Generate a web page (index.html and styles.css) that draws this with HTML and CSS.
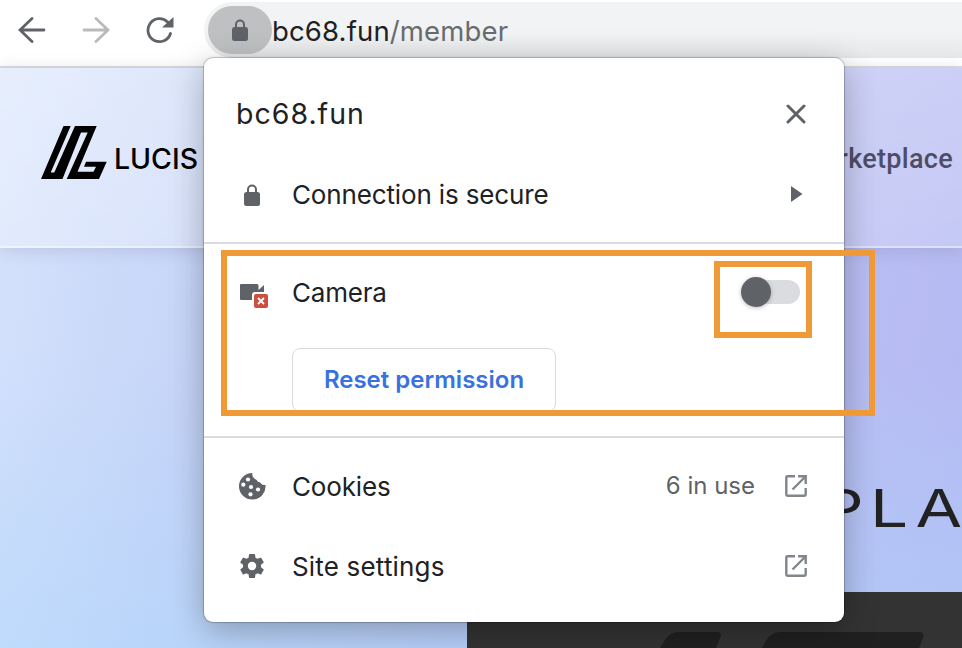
FILE: index.html
```html
<!DOCTYPE html>
<html lang="en">
<head>
<meta charset="utf-8">
<title>bc68.fun/member</title>
<link rel="stylesheet" href="styles.css">
</head>
<body>
<header class="toolbar">
  <nav class="nav">
    <svg width="28" height="28" viewBox="0 0 28 28"><path class="line" d="M26 14H2M14 2.500L2 14L14 25.500"/></svg>
    <svg class="disabled" width="28" height="28" viewBox="0 0 28 28"><path class="line" d="M2 14H26M14 2.500L26 14L14 25.500"/></svg>
    <svg class="reload" width="30" height="28" viewBox="0 0 30 28"><path class="line" d="M22.800 6.200A11.500 11.500 0 1 0 25.500 17.500"/><path class="fill" d="M28.500 1V11.500H17Z"/></svg>
  </nav>
  <div class="address">
    <span class="lock-pill"><svg width="18" height="22" viewBox="0 0 18 22"><path class="shackle" d="M5 9V5.500a4 4 0 0 1 8 0V9"/><rect class="fill" x="1" y="8" width="16" height="14" rx="2.500"/></svg></span>
    <span class="url">bc68.fun<span class="path">/member</span></span>
  </div>
</header>
<main class="page">
  <div class="site-header">
    <div class="brand">
      <svg class="mark" width="68" height="56" viewBox="0 0 68 56"><path d="M23.500 1H30.700L10.700 47.500H14.300L35 1H56.700L37.500 46.700H53.500L56 41.700H44L46 36.700H66.700L59 54H26.700L47.700 7.500H41L22.500 54H1Z"/></svg>
      <svg class="wordmark" width="88" height="28" viewBox="0 0 88 28"><text x="0" y="24" textLength="84" lengthAdjust="spacingAndGlyphs">LUCIS</text></svg>
    </div>
    <span class="menu-link">Marketplace</span>
  </div>
  <svg class="headline" width="118" height="48" viewBox="0 0 118 48"><g transform="scale(1.300 1)"><text y="43" x="-18 20 55">PLA</text></g></svg>
  <div class="dark-panel">
    <svg width="495" height="56" viewBox="0 0 495 56"><path d="M193 56L198 48Q203 40 212 40H250Q256 40 253 46L249 56ZM295 56L300 47Q305 40 314 40H452Q458 40 456 46L452 56Z"/></svg>
  </div>
</main>

<section class="popup">
  <div class="row title-row">
    <h1>bc68.fun</h1>
    <svg class="close" width="20" height="20" viewBox="0 0 20 20"><path d="M2 2L18 18M18 2L2 18"/></svg>
  </div>
  <div class="row secure-row">
    <span class="icon"><svg width="18" height="22" viewBox="0 0 18 22"><path class="shackle" d="M5 9V5.500a4 4 0 0 1 8 0V9"/><rect class="fill" x="1" y="8" width="16" height="14" rx="2.500"/></svg></span>
    <span class="label secure">Connection is secure</span>
    <svg class="chevron" width="12" height="16" viewBox="0 0 12 16"><path class="fill" d="M0 0L11.500 8L0 16Z"/></svg>
  </div>
  <hr>
  <div class="camera-group">
    <div class="row camera-row">
      <span class="icon"><svg class="camera" width="30" height="26" viewBox="0 0 30 26"><path class="fill" d="M2 1H18Q19.500 1 19.500 2.500V7L25 2V17H2Q1 17 1 16V2Q1 1 2 1Z"/><rect x="13" y="9" width="18" height="18" rx="3" fill="#fff"/><rect x="15" y="11" width="14" height="14" rx="2" fill="#cc4e3f"/><path d="M19 15L25 21M25 15L19 21" stroke="#fff" stroke-width="1.800"/></svg></span>
      <span class="label camera-label">Camera</span>
      <span class="toggle"><span class="knob"></span></span>
    </div>
    <button class="reset"><span>Reset permission</span></button>
  </div>
  <hr>
  <div class="row cookie-row">
    <span class="icon"><svg width="28" height="28" viewBox="0 0 28 28"><path class="fill" d="M14.500 1A13.300 13.300 0 1 0 27.500 13Q24.500 13.300 23 11.500Q22.500 9.500 20 10Q19 7.500 17 7Q13.500 5 14.500 1Z"/><g fill="#fff"><circle cx="10" cy="7.500" r="2.100"/><circle cx="5.300" cy="12.700" r="2.100"/><circle cx="13" cy="15" r="2.100"/><circle cx="20" cy="17.500" r="2.100"/><circle cx="12.500" cy="22.300" r="2.100"/></g></svg></span>
    <span class="label cookies">Cookies</span>
    <span class="count">6 in use</span>
    <svg class="open" width="24" height="24" viewBox="0 0 24 24"><path d="M11 2.300H3.500Q2.300 2.300 2.300 3.500V20.500Q2.300 21.700 3.500 21.700H20.500Q21.700 21.700 21.700 20.500V14M14 2.300H21.700V10M21 3L8.500 15.500"/></svg>
  </div>
  <div class="row settings-row">
    <span class="icon"><svg width="28" height="28" viewBox="2 2 20 20"><path class="fill" d="M19.430 12.980c.04-.32.070-.64.070-.98s-.03-.66-.07-.98l2.110-1.650c.19-.15.240-.42.120-.64l-2-3.460c-.12-.22-.39-.3-.61-.22l-2.490 1c-.52-.4-1.080-.73-1.690-.98l-.38-2.650C14.460 2.180 14.250 2 14 2h-4c-.25 0-.46.180-.49.420l-.38 2.650c-.61.250-1.170.59-1.690.98l-2.490-1c-.23-.09-.49 0-.61.220l-2 3.460c-.13.220-.07.490.12.640l2.110 1.650c-.04.320-.07.650-.07.980s.03.660.070.980l-2.110 1.650c-.19.150-.24.420-.12.640l2 3.460c.12.220.39.300.61.220l2.490-1c.52.400 1.080.73 1.690.98l.38 2.650c.03.240.24.420.49.420h4c.25 0 .46-.18.490-.42l.38-2.650c.61-.25 1.170-.59 1.690-.98l2.490 1c.23.090.49 0 .61-.22l2-3.460c.12-.22.070-.49-.12-.64l-2.110-1.650zM12 15.500a3.500 3.500 0 1 1 0-7 3.500 3.500 0 0 1 0 7z" transform="translate(1.700 1.700) scale(.86)"/></svg></span>
    <span class="label settings">Site settings</span>
    <svg class="open" width="24" height="24" viewBox="0 0 24 24"><path d="M11 2.300H3.500Q2.300 2.300 2.300 3.500V20.500Q2.300 21.700 3.500 21.700H20.500Q21.700 21.700 21.700 20.500V14M14 2.300H21.700V10M21 3L8.500 15.500"/></svg>
  </div>
</section>
<div class="highlight highlight-row"></div>
<div class="highlight highlight-toggle"></div>
</body>
</html>
```
FILE: styles.css
```css
* { box-sizing: border-box; }
body {
  position: relative;
  margin: 0;
  width: 962px;
  height: 648px;
  overflow: hidden;
  display: flex;
  flex-direction: column;
  font-family: Inter, "Liberation Sans", sans-serif;
  color: #202124;
}
svg { display: block; flex: none; }
.fill { fill: #5f6368; }
.line { fill: none; stroke: #5f6368; stroke-width: 2.8; stroke-linecap: round; }
.shackle { fill: none; stroke: #5f6368; stroke-width: 2; }
.disabled .line { stroke: #bababa; }

.toolbar {
  display: flex;
  height: 68px;
  flex: none;
  background: #fff;
  border-bottom: 2px solid #dadce0;
}
.nav { display: flex; align-items: center; width: 204px; height: 60px; padding-left: 18px; }
.nav svg + svg { margin-left: 36px; }
.nav .reload { margin-left: 35px; }
.address {
  display: flex;
  align-items: center;
  flex: 1;
  height: 56px;
  margin-top: 2px;
  padding-left: 4px;
  border-radius: 28px 0 0 28px;
  background: linear-gradient(to bottom, #f1f3f4 50%, #e6e7e9);
}
.lock-pill {
  display: flex;
  align-items: center;
  justify-content: center;
  width: 64px;
  height: 48px;
  border-radius: 24px;
  background: #bfc0c2;
}
.url { padding-top: 2px; font-size: 27.5px; line-height: 54px; letter-spacing: .15px; white-space: nowrap; }
.path { color: #696b6e; }

.page {
  flex: 1;
  display: flex;
  flex-direction: column;
  align-items: flex-end;
  background:
    linear-gradient(to bottom, transparent 50%, rgba(172, 216, 253, .45)),
    linear-gradient(100deg, #d5e3fc 0%, #c6d4f8 23%, #bcc2f4 65%, #b5b9f2 100%);
}
.site-header {
  display: flex;
  align-items: center;
  justify-content: space-between;
  width: 100%;
  height: 180px;
  flex: none;
  padding: 0 9px 0 40px;
  background: linear-gradient(165deg, rgba(255, 255, 255, .42), rgba(255, 255, 255, .2));
  border-bottom: 2px solid rgba(255, 255, 255, .35);
  box-shadow: 0 2px 16px rgba(60, 60, 90, .16);
}
.brand { display: flex; align-items: center; padding-bottom: 9px; }
.wordmark { margin: 12px 0 0 6px; }
.wordmark text { font: 500 28px Inter, sans-serif; }
.menu-link {
  padding-top: 3px;
  font: 500 27px/40px Roboto, sans-serif;
  letter-spacing: .3px;
  color: #4f4c67;
}
.headline { margin-top: 236px; fill: #222; }
.headline text { font: 400 52px Inter, sans-serif; }
.dark-panel { width: 495px; height: 56px; margin-top: auto; background: #333; }
.dark-panel path { fill: #202020; }

.popup {
  position: absolute;
  left: 204px;
  top: 58px;
  width: 640px;
  height: 564px;
  background: #fff;
  border-radius: 9px;
  box-shadow: 0 0 1px 1px rgba(0, 0, 0, .22), 0 9px 34px rgba(0, 0, 0, .28);
}
.popup hr { height: 2px; margin: 0; border: 0; background: #dadce0; }
.row { display: flex; align-items: center; padding: 0 36px 0 32px; white-space: nowrap; }
.title-row { height: 112px; justify-content: space-between; }
.title-row h1 { margin: 0; font-size: 28.500px; font-weight: 400; line-height: 40px; letter-spacing: 1px; }
.close { margin-right: 2px; }
.close path { stroke: #5f6368; stroke-width: 3; fill: none; stroke-linecap: round; }
.secure-row { height: 72px; padding-bottom: 22px; }
.icon { display: flex; justify-content: center; width: 32px; flex: none; }
.label { margin-left: 24px; flex: 1; font-size: 26px; line-height: 40px; }
.secure { letter-spacing: -.14px; }
.camera-label { letter-spacing: -.2px; }
.cookies { letter-spacing: -.15px; }
.settings { letter-spacing: .18px; }
.chevron { margin: 0 5px 2px 0; }
.camera-group { height: 192px; }
.camera-row { height: 98px; padding-right: 44px; }
.camera { margin: 5px 0 0 4px; }
.toggle { display: flex; align-items: center; width: 58px; height: 24px; border-radius: 12px; background: #dadce0; margin-top: -2px; }
.knob { flex: none; width: 30px; height: 30px; margin-left: -1px; border-radius: 50%; background: #5f6368; box-shadow: 0 1px 4px rgba(0, 0, 0, .25); }
.reset {
  display: block;
  width: 264px;
  height: 64px;
  margin: 6px 0 0 88px;
  padding: 0;
  border: 1px solid #dadce0;
  border-radius: 8px;
  background: #fff;
  color: #3871e0;
  font: 600 24px/60px Inter, sans-serif;
}
.cookie-row { height: 98px; }
.settings-row { height: 62px; }
.cookie-row .icon, .settings-row .icon { margin-bottom: 2px; }
.count { margin: 0 29px 4px 0; font-size: 24px; color: #5f6368; }
.open { margin-bottom: 2px; }
.open path { fill: none; stroke: #80868b; stroke-width: 2.4; }

.highlight { position: absolute; border: 6px solid #f09a37; }
.highlight-row { left: 221px; top: 250px; width: 654px; height: 166px; }
.highlight-toggle { left: 714px; top: 261px; width: 98px; height: 77px; }
```
